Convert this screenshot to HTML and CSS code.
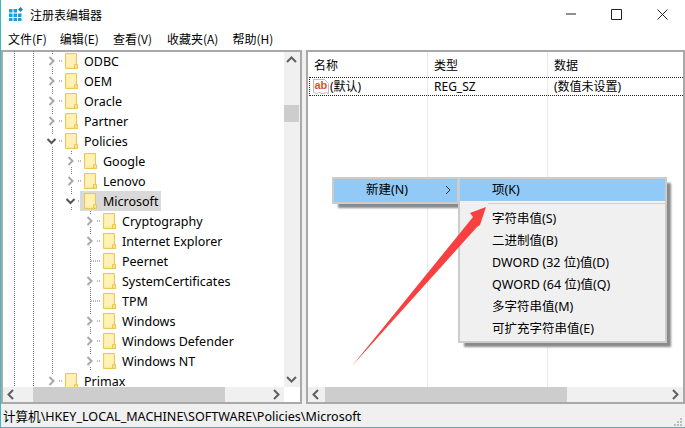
FILE: index.html
```html
<!DOCTYPE html>
<html lang="zh">
<head>
<meta charset="utf-8">
<title>注册表编辑器</title>
<link rel="stylesheet" href="styles.css">
</head>
<body>
<svg class="defs" width="0" height="0" aria-hidden="true">
  <symbol id="folder" viewBox="0 0 13 16">
    <path d="M.5.5h11v12h1v3H.5z" fill="#fee89a" stroke="#eac958"/>
    <path d="M1.500 1.500h9v12h-9z" fill="#fff1b8"/>
    <path d="M9.500 11.500h3v4h-3z" fill="#fddf85" stroke="#eac958"/>
  </symbol>
  <symbol id="closed" viewBox="0 0 19 20">
    <rect x="3" y="4" width="13" height="12" fill="#fff"/>
    <path d="M6.500 6l4 4-4 4" fill="none" stroke="#a8a8a8" stroke-width="2"/>
    <path d="M16 10h1M18 10h1" stroke="#777"/>
  </symbol>
  <symbol id="open" viewBox="0 0 19 20">
    <rect x="3" y="4" width="13" height="12" fill="#fff"/>
    <path d="M4.500 8l4 4 4-4" fill="none" stroke="#555" stroke-width="2"/>
    <path d="M16 10h1M18 10h1" stroke="#777"/>
  </symbol>
  <symbol id="leaf" viewBox="0 0 19 20">
    <path d="M10 10h1M12 10h1M14 10h1M16 10h1M18 10h1" stroke="#777"/>
  </symbol>
  <symbol id="arr-u" viewBox="0 0 15 15"><path d="M3 10l4.500-4.500L12 10" fill="none" stroke="#606060" stroke-width="2"/></symbol>
  <symbol id="arr-d" viewBox="0 0 15 15"><path d="M3 5l4.500 4.500L12 5" fill="none" stroke="#606060" stroke-width="2"/></symbol>
  <symbol id="arr-l" viewBox="0 0 15 15"><path d="M10 3L5.500 7.500 10 12" fill="none" stroke="#606060" stroke-width="2"/></symbol>
  <symbol id="arr-r" viewBox="0 0 15 15"><path d="M5 3l4.500 4.500L5 12" fill="none" stroke="#606060" stroke-width="2"/></symbol>
</svg>

<div class="window">
  <header class="titlebar">
    <svg class="appicon" width="14" height="14" viewBox="0 0 14 14">
      <path d="M0 2h3.500v3.500H0zM4.500 2H8v3.500H4.500zM0 6.500h3.500V10H0zM4.500 6.500H8V10H4.500zM9 6.500h3.500V10H9zM0 11h3.500v3H0zM4.500 11H8v3H4.500zM9 11h3.500v3H9z" fill="#1a9fdc"/>
      <path d="M11.500 0L14 2.500 11.500 5 9 2.500z" fill="#1f7fb8"/>
    </svg>
    <span class="title-text">注册表编辑器</span>
    <div class="controls">
      <svg class="ctl-min" width="10" height="10" viewBox="0 0 10 10"><path d="M0 5h10" stroke="#222"/></svg>
      <svg class="ctl-max" width="11" height="11" viewBox="0 0 11 11"><path d="M.5.500h10v10H.5z" fill="none" stroke="#222"/></svg>
      <svg class="ctl-close" width="11" height="11" viewBox="0 0 11 11"><path d="M.5.500l10 10M10.500.500l-10 10" stroke="#222"/></svg>
    </div>
  </header>

  <nav class="menubar">
    <span class="m1">文件(F)</span>
    <span class="m2">编辑(E)</span>
    <span class="m3">查看(V)</span>
    <span class="m4">收藏夹(A)</span>
    <span class="m5">帮助(H)</span>
  </nav>

  <main class="panes">
    <section class="pane tree-pane">
      <div class="pane-main">
        <div class="tree">
          <div class="row"><i class="g"></i><i class="g"></i><span class="g"><svg class="t"><use href="#closed"/></svg></span><span class="lab"><svg class="f"><use href="#folder"/></svg>ODBC</span></div>
          <div class="row"><i class="g"></i><i class="g"></i><span class="g"><svg class="t"><use href="#closed"/></svg></span><span class="lab"><svg class="f"><use href="#folder"/></svg>OEM</span></div>
          <div class="row"><i class="g"></i><i class="g"></i><span class="g"><svg class="t"><use href="#closed"/></svg></span><span class="lab"><svg class="f"><use href="#folder"/></svg>Oracle</span></div>
          <div class="row"><i class="g"></i><i class="g"></i><span class="g"><svg class="t"><use href="#closed"/></svg></span><span class="lab"><svg class="f"><use href="#folder"/></svg>Partner</span></div>
          <div class="row"><i class="g"></i><i class="g"></i><span class="g"><svg class="t"><use href="#open"/></svg></span><span class="lab"><svg class="f"><use href="#folder"/></svg>Policies</span></div>
          <div class="row"><i class="g"></i><i class="g"></i><i class="g"></i><span class="g"><svg class="t"><use href="#closed"/></svg></span><span class="lab"><svg class="f"><use href="#folder"/></svg>Google</span></div>
          <div class="row"><i class="g"></i><i class="g"></i><i class="g"></i><span class="g"><svg class="t"><use href="#closed"/></svg></span><span class="lab"><svg class="f"><use href="#folder"/></svg>Lenovo</span></div>
          <div class="row"><i class="g"></i><i class="g"></i><i class="g"></i><span class="g-top"><svg class="t"><use href="#open"/></svg></span><span class="lab sel"><svg class="f"><use href="#folder"/></svg>Microsoft</span></div>
          <div class="row"><i class="g"></i><i class="g"></i><i class="g"></i><i class="e"></i><span class="g"><svg class="t"><use href="#closed"/></svg></span><span class="lab"><svg class="f"><use href="#folder"/></svg>Cryptography</span></div>
          <div class="row"><i class="g"></i><i class="g"></i><i class="g"></i><i class="e"></i><span class="g"><svg class="t"><use href="#closed"/></svg></span><span class="lab"><svg class="f"><use href="#folder"/></svg>Internet Explorer</span></div>
          <div class="row"><i class="g"></i><i class="g"></i><i class="g"></i><i class="e"></i><span class="g"><svg class="t"><use href="#leaf"/></svg></span><span class="lab"><svg class="f"><use href="#folder"/></svg>Peernet</span></div>
          <div class="row"><i class="g"></i><i class="g"></i><i class="g"></i><i class="e"></i><span class="g"><svg class="t"><use href="#closed"/></svg></span><span class="lab"><svg class="f"><use href="#folder"/></svg>SystemCertificates</span></div>
          <div class="row"><i class="g"></i><i class="g"></i><i class="g"></i><i class="e"></i><span class="g"><svg class="t"><use href="#leaf"/></svg></span><span class="lab"><svg class="f"><use href="#folder"/></svg>TPM</span></div>
          <div class="row"><i class="g"></i><i class="g"></i><i class="g"></i><i class="e"></i><span class="g"><svg class="t"><use href="#closed"/></svg></span><span class="lab"><svg class="f"><use href="#folder"/></svg>Windows</span></div>
          <div class="row"><i class="g"></i><i class="g"></i><i class="g"></i><i class="e"></i><span class="g"><svg class="t"><use href="#closed"/></svg></span><span class="lab"><svg class="f"><use href="#folder"/></svg>Windows Defender</span></div>
          <div class="row"><i class="g"></i><i class="g"></i><i class="g"></i><i class="e"></i><span class="g-top"><svg class="t"><use href="#closed"/></svg></span><span class="lab"><svg class="f"><use href="#folder"/></svg>Windows NT</span></div>
          <div class="row"><i class="g"></i><i class="g"></i><span class="g"><svg class="t"><use href="#closed"/></svg></span><span class="lab"><svg class="f"><use href="#folder"/></svg>Primax</span></div>
        </div>
        <div class="vscroll">
          <svg class="sb-btn"><use href="#arr-u"/></svg>
          <div class="vtrack"><div class="vthumb"></div></div>
          <svg class="sb-btn"><use href="#arr-d"/></svg>
        </div>
      </div>
      <div class="hscroll hs-tree">
        <svg class="sb-btn"><use href="#arr-l"/></svg>
        <div class="htrack"><div class="hthumb ht-tree"></div></div>
        <svg class="sb-btn"><use href="#arr-r"/></svg>
        <div class="corner"></div>
      </div>
    </section>

    <section class="pane list-pane">
      <div class="list">
        <div class="cols">
          <div class="col col1"></div>
          <div class="col col2"></div>
        </div>
        <div class="list-head">
          <span class="c1">名称</span><span class="c2">类型</span><span class="c3">数据</span>
        </div>
        <div class="list-row">
          <span class="c1 name">
            <svg class="ab" width="16" height="16" viewBox="0 0 16 16">
              <path d="M.5.500h11l4 4v10l-3-1-3 1.500-3-1.500-3 1-3-1z" fill="#fff" stroke="#bdbdbd"/>
              <text x="1.500" y="10" class="ab-text">ab</text>
            </svg>(默认)</span><span class="c2">REG_SZ</span><span class="c3">(数值未设置)</span>
        </div>
      </div>
      <div class="hscroll">
        <svg class="sb-btn"><use href="#arr-l"/></svg>
        <div class="htrack"><div class="hthumb ht-list"></div></div>
        <svg class="sb-btn"><use href="#arr-r"/></svg>
      </div>
    </section>
  </main>

  <footer class="status">
    <span>计算机\HKEY_LOCAL_MACHINE\SOFTWARE\Policies\Microsoft</span>
    <svg class="grip" width="11" height="11" viewBox="0 0 11 11"><path d="M8 2h2v2H8zM8 5h2v2H8zM5 5h2v2H5zM8 8h2v2H8zM5 8h2v2H5zM2 8h2v2H2z" fill="#bcbcbc"/></svg>
  </footer>
</div>

<div class="menu menu-new">
  <div class="item on"><span>新建(N)</span><svg class="sub" width="6" height="10" viewBox="0 0 6 10"><path d="M1 1l4 4-4 4" fill="none" stroke="#333"/></svg></div>
</div>
<div class="menu menu-sub">
  <div class="item on"><span>项(K)</span></div>
  <div class="sep"></div>
  <div class="item"><span>字符串值(S)</span></div>
  <div class="item"><span>二进制值(B)</span></div>
  <div class="item"><span>DWORD (32 位)值(D)</span></div>
  <div class="item"><span>QWORD (64 位)值(Q)</span></div>
  <div class="item"><span>多字符串值(M)</span></div>
  <div class="item"><span>可扩充字符串值(E)</span></div>
</div>

<svg class="arrow" width="685" height="428" viewBox="0 0 685 428" aria-hidden="true">
  <path d="M486 207L470 213 473 217 352 366 477 227 480 225z" fill="#f84040"/>
</svg>
</body>
</html>
```

FILE: styles.css
```css
* { box-sizing: border-box; }
html, body { margin: 0; padding: 0; }
body {
  width: 685px;
  height: 428px;
  overflow: hidden;
  position: relative;
  background: #fff;
  color: #000;
  font: 13px/20px "Noto Sans", "Noto Sans CJK SC", sans-serif;
}
.defs { position: absolute; }

.window {
  width: 685px;
  height: 428px;
  display: flex;
  flex-direction: column;
  border-left: 1px solid #3fb6c4;
  border-bottom: 2px solid #3fb6c4;
}

.titlebar {
  height: 28px;
  flex: none;
  display: flex;
  align-items: center;
  padding-left: 8px;
  background: #fff;
  font-size: 12px;
}
.appicon { margin-right: 7px; }
.title-text { font-family: "Noto Sans CJK SC", sans-serif; margin-top: 2px; }
.controls {
  margin-left: auto;
  display: flex;
  align-items: center;
  gap: 35px;
  padding-right: 17px;
}

.menubar {
  height: 22px;
  flex: none;
  display: flex;
  align-items: center;
  padding-left: 7px;
  font: 12px/22px "Noto Sans CJK SC", sans-serif;
  background: #fff;
}
.m2, .m4, .m5 { margin-right: 14px; }
.m1 { margin-right: 13px; }
.m3 { margin-right: 15px; }

.panes {
  flex: none;
  height: 354px;
  display: flex;
  gap: 4px;
  background: #f0f0f0;
}
.pane {
  border: 2px solid #a9a9a9;
  background: #fff;
  display: flex;
  flex-direction: column;
}
.tree-pane { width: 301px; flex: none; }
.list-pane { flex: 1; min-width: 0; }
.pane-main { flex: 1; min-height: 0; display: flex; }

.tree {
  flex: 1;
  min-width: 0;
  overflow: hidden;
  padding-left: 2px;
  margin-top: -1px;
  font-size: 12.500px;
}
.row { height: 20px; display: flex; align-items: stretch; }
.g, .g-top, .e { display: block; flex: none; width: 19px; height: 20px; }
.g, .g-top { background: linear-gradient(#777 50%, transparent 50%) 9px 0 / 1px 2px repeat-y; }
.t { display: block; width: 19px; height: 20px; }
.lab {
  display: flex;
  align-items: center;
  gap: 6px;
  padding: 2px 3px 0;
  white-space: nowrap;
  line-height: 20px;
}
.sel { background: #d9d9d9; margin-left: -1px; padding-left: 4px; }
.f { width: 13px; height: 16px; flex: none; margin-top: -2px; }

.vscroll {
  width: 16px;
  flex: none;
  padding-right: 1px;
  display: flex;
  flex-direction: column;
  background: #f0f0f0;
}
.sb-btn { width: 15px; height: 15px; flex: none; display: block; }
.vtrack { flex: 1; padding-top: 38px; }
.vthumb { height: 17px; background: #cdcdcd; }

.hscroll {
  height: 15px;
  flex: none;
  display: flex;
  background: #f0f0f0;
}
.htrack { flex: 1; min-width: 0; display: flex; }
.hthumb { height: 15px; background: #cdcdcd; }
.ht-tree { width: 192px; margin-left: 15px; }
.ht-list { width: 242px; margin-left: 2px; }
.corner { width: 16px; flex: none; background: #fff; }

.list { flex: 1; min-height: 0; position: relative; overflow: hidden; }
.cols { position: absolute; inset: 0; pointer-events: none; }
.col { position: absolute; top: 0; bottom: 0; width: 1px; background: #e5ebf2; }
.col1 { left: 119px; }
.col2 { left: 239px; }
.list-head {
  position: relative;
  height: 25px;
  display: flex;
  align-items: center;
  font: 12px/20px "Noto Sans CJK SC", sans-serif;
}
.list-row {
  position: relative;
  height: 19px;
  margin-left: 1px;
  display: flex;
  align-items: center;
  border: 1px dotted #222;
  border-right: 0;
  font-size: 12px;
}
.c1, .c2, .c3 { flex: none; width: 120px; padding-left: 6px; white-space: nowrap; }
.list-row .c1 { width: 118px; padding-left: 3px; }
.name { display: flex; align-items: center; gap: 1px; }
.ab { flex: none; }
.ab-text { font: bold 11px "Liberation Sans", sans-serif; fill: #d9532c; }

.status {
  flex: 1;
  display: flex;
  align-items: center;
  justify-content: space-between;
  padding: 3px 2px 0 2px;
  background: #f0f0f0;
  font-size: 12.550px;
  white-space: nowrap;
}
.grip { align-self: flex-end; }

.menu {
  position: absolute;
  background: #f0f0f0;
  border: 2px solid #cccccc;
  box-shadow: 5px 5px 2px -1px #8a8a8a;
  font-size: 12.500px;
  white-space: nowrap;
}
.menu-new { left: 332px; top: 177px; width: 127px; height: 27px; }
.menu-sub { left: 458px; top: 177px; width: 209px; height: 166px; }
.item { height: 22px; line-height: 22px; display: flex; align-items: center; padding-left: 32px; }
.menu-new .item { height: 23px; justify-content: space-between; padding-right: 6px; padding-bottom: 2px; }
.on { background: #91c9f7; }
.sep { height: 1px; margin: 2px 0 4px 28px; background: #cfcfcf; }
.arrow { position: absolute; left: 0; top: 0; pointer-events: none; }
```
